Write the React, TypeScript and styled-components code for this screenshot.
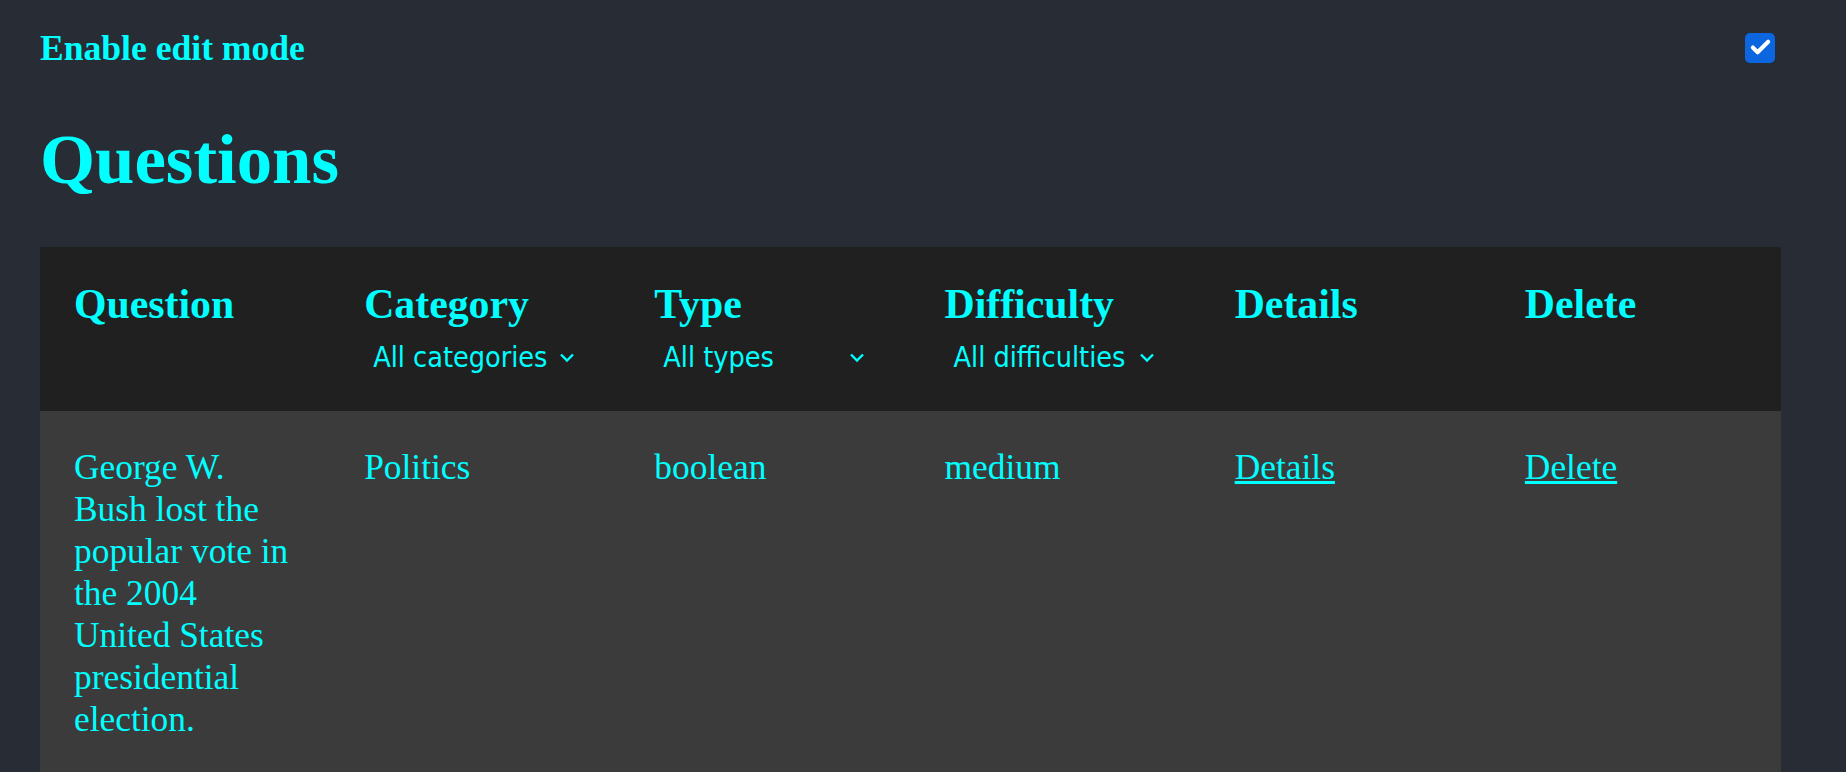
import React from 'react';
import styled, { createGlobalStyle } from 'styled-components';
import { Check } from 'lucide-react';

const GlobalStyle = createGlobalStyle`
  html, body {
    margin: 0;
    padding: 0;
    background: #282c34;
  }
`;

const Page = styled.div`
  min-height: 100vh;
  box-sizing: border-box;
  padding: 27px 65px 0 40px;
  background: #282c34;
  color: #00ffff;
  font-family: 'Liberation Serif', 'Times New Roman', serif;
`;

const TopBar = styled.div`
  display: flex;
  align-items: center;
  justify-content: space-between;
  height: 41px;
`;

const ModeLabel = styled.span`
  font-size: 35.6px;
  font-weight: bold;
`;

const CheckBox = styled.span`
  display: inline-flex;
  align-items: center;
  justify-content: center;
  width: 30px;
  height: 30px;
  margin-right: 6px;
  border-radius: 5px;
  background: #0b66e0;
  color: #fff;
`;

const Title = styled.h1`
  margin: 51px 0 47px;
  font-size: 70.8px;
  font-weight: bold;
  line-height: normal;
`;

const Table = styled.div`
  width: 1741px;
`;

const Row = styled.div<{ $head?: boolean }>`
  display: grid;
  grid-template-columns: repeat(6, 1fr);
  background: ${(p) => (p.$head ? '#202020' : '#3b3b3b')};
`;

const HeadCell = styled.div`
  padding: 34px;
  display: flex;
  flex-direction: column;
  align-items: flex-start;
`;

const HeadTitle = styled.span`
  font-size: 41.8px;
  font-weight: bold;
  line-height: 47px;
`;

const SelectWrap = styled.label`
  display: inline-flex;
  align-items: center;
  height: 49px;
  padding-left: 9px;
  padding-top: 9px;
  box-sizing: border-box;
`;

const Select = styled.select`
  appearance: none;
  background: transparent;
  border: none;
  outline: none;
  padding: 0;
  margin: 0;
  width: 186px;
  color: #00ffff;
  font-family: 'DejaVu Sans Condensed', 'DejaVu Sans', sans-serif;
  font-stretch: condensed;
  font-size: 28.5px;
`;

const Cell = styled.div`
  padding: 35px 34px 34px;
  font-size: 35.4px;
  line-height: 42px;
`;

const CellLink = styled.a`
  color: #00ffff;
  text-decoration: underline;
  cursor: pointer;
`;

const Chevron = () => (
  <svg width="16" height="11" viewBox="0 0 16 11" fill="none">
    <path d="M2 2.5 L8 8.5 L14 2.5" stroke="#00ffff" strokeWidth="2.4" />
  </svg>
);

const filters: Record<string, string[]> = {
  Category: ['All categories', 'Politics', 'History', 'Science & Nature'],
  Type: ['All types', 'multiple', 'boolean'],
  Difficulty: ['All difficulties', 'easy', 'medium', 'hard'],
};

const columns = ['Question', 'Category', 'Type', 'Difficulty', 'Details', 'Delete'];

export default function App() {
  return (
    <Page>
      <GlobalStyle />
      <TopBar>
        <ModeLabel>Enable edit mode</ModeLabel>
        <CheckBox role="checkbox" aria-checked="true">
          <Check size={23} strokeWidth={4.2} />
        </CheckBox>
      </TopBar>
      <Title>Questions</Title>
      <Table>
        <Row $head>
          {columns.map((col) => (
            <HeadCell key={col}>
              <HeadTitle>{col}</HeadTitle>
              {filters[col] && (
                <SelectWrap>
                  <Select defaultValue={filters[col][0]}>
                    {filters[col].map((o) => (
                      <option key={o}>{o}</option>
                    ))}
                  </Select>
                  <Chevron />
                </SelectWrap>
              )}
            </HeadCell>
          ))}
        </Row>
        <Row>
          <Cell>George W. Bush lost the popular vote in the 2004 United States presidential election.</Cell>
          <Cell>Politics</Cell>
          <Cell>boolean</Cell>
          <Cell>medium</Cell>
          <Cell>
            <CellLink>Details</CellLink>
          </Cell>
          <Cell>
            <CellLink>Delete</CellLink>
          </Cell>
        </Row>
      </Table>
    </Page>
  );
}
